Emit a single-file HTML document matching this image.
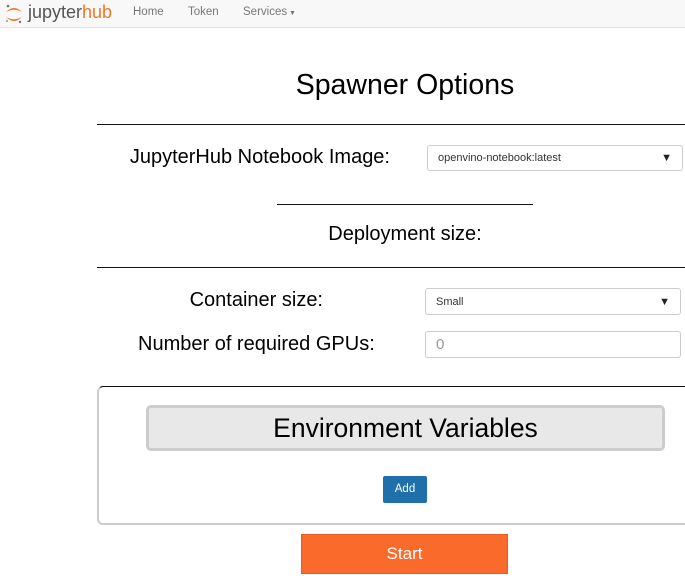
<!DOCTYPE html>
<html><head><style>
*{box-sizing:border-box;margin:0;padding:0}
body{width:685px;height:581px;overflow:hidden;background:#fff;font-family:"Liberation Sans",sans-serif;color:#000;position:relative}
.a{position:absolute}
.nav{left:0;top:0;width:685px;height:28px;background:#f8f8f8;border-bottom:1px solid #e3e3e3}
.nl{font-size:11.5px;color:#777;top:6px}
.hr{height:1px;background:#111}
.lbl{font-size:20px;white-space:nowrap}
.sel{border:1px solid #ccc;border-radius:3px;background:#fff;font-size:11px;color:#333;padding-left:10px;display:flex;align-items:center}
.sel .ar{position:absolute;right:10px;font-size:11px;color:#222}
</style></head><body>
<div class="a nav"></div>
<svg class="a" style="left:3px;top:3px" width="22" height="22" viewBox="0 0 20 22">
<path d="M2 9 Q10 1 18 9 Q10 4.5 2 9Z" fill="#f37726"/>
<path d="M2 14 Q10 22 18 14 Q10 18.5 2 14Z" fill="#f37726"/>
<circle cx="4" cy="3" r="1.3" fill="#767677"/><circle cx="16" cy="19" r="1.2" fill="#767677"/><circle cx="3" cy="18" r="0.9" fill="#767677"/>
</svg>
<div class="a" style="left:28px;top:2px;font-size:18px;color:#555">jupyter<span style="color:#f37726">hub</span></div>
<div class="a nl" style="left:133px">Home</div>
<div class="a nl" style="left:188px">Token</div>
<div class="a nl" style="left:243px">Services<span style="font-size:7px"> ▼</span></div>

<div class="a" style="left:0;width:810px;text-align:center;top:69px;font-size:28.5px">Spawner Options</div>
<div class="a hr" style="left:97px;top:124px;width:588px"></div>
<div class="a lbl" style="right:295px;top:146px">JupyterHub Notebook Image:</div>
<div class="a sel" style="left:427px;top:145px;width:256px;height:26px">openvino-notebook:latest<span class="ar">▼</span></div>
<div class="a hr" style="left:277px;top:204px;width:256px"></div>
<div class="a lbl" style="left:0;width:810px;text-align:center;top:223px">Deployment size:</div>
<div class="a hr" style="left:97px;top:267px;width:588px"></div>
<div class="a lbl" style="right:362px;top:289px">Container size:</div>
<div class="a sel" style="left:425px;top:288px;width:256px;height:27px">Small<span class="ar">▼</span></div>
<div class="a lbl" style="left:138px;top:333px">Number of required GPUs:</div>
<div class="a sel" style="left:425px;top:331px;width:256px;height:27px;font-size:15px;color:#999">0</div>

<div class="a" style="left:97px;top:386px;width:620px;height:139px;border:2px solid #ccc;border-top:1px solid #111;border-radius:6px"></div>
<div class="a" style="left:146px;top:405px;width:519px;height:46px;background:#e8e8e8;border:3px solid #ccc;border-radius:5px;font-size:26.5px;text-align:center;line-height:40px">Environment Variables</div>
<div class="a" style="left:383px;top:476px;width:44px;height:27px;background:#1f6fab;border-radius:2px;color:#fff;font-size:11.5px;text-align:center;line-height:27px">Add</div>
<div class="a" style="left:301px;top:534px;width:207px;height:40px;background:#f96a2b;border:1px solid #e55a1e;color:#fff;font-size:17px;text-align:center;line-height:38px">Start</div>
</body></html>
